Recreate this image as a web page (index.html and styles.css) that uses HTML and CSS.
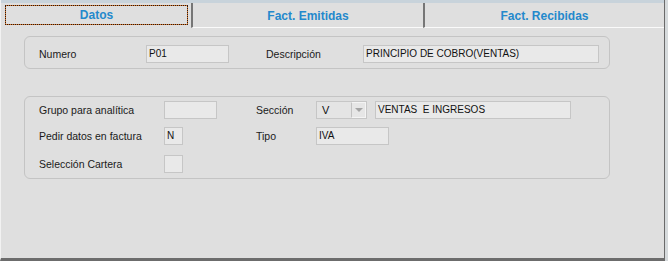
FILE: index.html
```html
<!DOCTYPE html>
<html lang="es">

<head>
    <meta charset="UTF-8">
    <title>Forma de cobro</title>
    <link rel="stylesheet" href="styles.css">
</head>

<body>
    <div class="window">
        <div class="frame">
            <div class="topbar"></div>

            <div class="tabs">
                <div class="tab tab-active"><span class="focus">Datos</span></div>
                <div class="tab tab-second">Fact. Emitidas</div>
                <div class="tab tab-third">Fact. Recibidas</div>
            </div>

            <div class="panel">
                <div class="group group-top">
                    <div class="row">
                        <label class="lbl lbl-num">Numero</label>
                        <div class="cell cell-num"><span class="field field-num">P01</span></div>
                        <label class="lbl lbl-desc">Descripción</label>
                        <span class="field field-desc">PRINCIPIO DE COBRO(VENTAS)</span>
                    </div>
                </div>

                <div class="group group-bottom">
                    <div class="row">
                        <label class="lbl lbl-wide">Grupo para analítica</label>
                        <div class="cell cell-wide"><span class="field field-grupo"></span></div>
                        <label class="lbl lbl-short">Sección</label>
                        <div class="select">
                            <span class="select-value">V</span>
                            <span class="select-btn">
                                <svg width="8" height="4" viewBox="0 0 8 4"><path d="M0 0 L8 0 L4 4 Z" fill="#a4a4a4"/></svg>
                            </span>
                        </div>
                        <span class="field field-seccion">VENTAS&nbsp; E INGRESOS</span>
                    </div>
                    <div class="row row-gap">
                        <label class="lbl lbl-wide">Pedir datos en factura</label>
                        <div class="cell cell-wide"><span class="field field-small">N</span></div>
                        <label class="lbl lbl-short">Tipo</label>
                        <span class="field field-tipo">IVA</span>
                    </div>
                    <div class="row row-gap-lg">
                        <label class="lbl lbl-wide">Selección Cartera</label>
                        <div class="cell cell-wide"><span class="field field-small"></span></div>
                    </div>
                </div>
            </div>
        </div>
    </div>
</body>

</html>
```

FILE: styles.css
```css
body {
    margin: 0;
    font-family: "Liberation Sans", Arial, sans-serif;
}

.window {
    width: 668px;
    height: 261px;
    background-color: #d6dadc;
}

.frame {
    width: 665px;
    height: 261px;
    box-sizing: border-box;
    display: flex;
    flex-direction: column;
    background-color: #dfdfdf;
    border-left: 1px solid #f2f2f2;
    border-right: 1px solid #6a6a6a;
    border-bottom: 3px solid #6c6c6c;
}

.topbar {
    height: 3px;
    background-color: #c8d3db;
}

/* onglets */
.tabs {
    display: flex;
    height: 25px;
}

.tab {
    box-sizing: border-box;
    display: flex;
    align-items: center;
    justify-content: center;
    font-size: 12px;
    font-weight: bold;
    color: #2489cc;
}

.tab-active {
    width: 188px;
    margin-left: 2px;
    padding: 2px 3px 3px 2px;
}

.focus {
    flex: 1;
    align-self: stretch;
    display: flex;
    align-items: center;
    justify-content: center;
    border: 1px solid #d9782e;
    outline: 1px dotted #2a1a10;
    outline-offset: -1px;
    padding-bottom: 1px;
}

.tab-second,
.tab-third {
    border-left: 2px solid #767676;
    border-bottom: 1px solid #fafafa;
    padding-top: 1px;
}

.tab-second {
    width: 232px;
}

.tab-third {
    flex: 1;
}

/* contenu */
.panel {
    flex: 1;
    padding: 8px 0 0 23px;
}

.group {
    width: 586px;
    box-sizing: border-box;
    border: 1px solid #c4c4c4;
    border-radius: 6px;
    padding: 0 0 0 14px;
}

.group-top {
    padding-top: 8px;
    padding-bottom: 5px;
}

.group-bottom {
    margin-top: 27px;
    padding-top: 4px;
    padding-bottom: 5px;
}

.row {
    display: flex;
    align-items: center;
    height: 18px;
}

.row-gap {
    margin-top: 8px;
}

.row-gap-lg {
    margin-top: 10px;
}

.lbl {
    font-size: 10.5px;
    color: #1a1a1a;
}

.lbl-num {
    width: 107px;
}

.lbl-desc {
    width: 97px;
}

.lbl-wide {
    width: 125px;
}

.lbl-short {
    width: 60px;
}

.cell-num {
    width: 120px;
}

.cell-wide {
    width: 92px;
}

.field {
    display: block;
    box-sizing: border-box;
    height: 18px;
    padding: 1px 2px;
    line-height: 14px;
    font-size: 10px;
    color: #111;
    background-color: #e9e9e9;
    border: 1px solid #c6c6c6;
    white-space: nowrap;
}

.field-num {
    width: 83px;
}

.field-desc {
    width: 236px;
}

.field-grupo {
    width: 53px;
}

.field-small {
    width: 19px;
}

.field-tipo {
    width: 73px;
}

.field-seccion {
    width: 196px;
    margin-left: 8px;
}

/* liste déroulante */
.select {
    display: flex;
    width: 51px;
    height: 18px;
    box-sizing: border-box;
    border: 1px solid #c6c6c6;
    background-color: #e4e4e4;
}

.select-value {
    flex: 1;
    padding-left: 5px;
    font-size: 11px;
    line-height: 16px;
    color: #111;
}

.select-btn {
    width: 15px;
    box-sizing: border-box;
    display: flex;
    align-items: center;
    justify-content: center;
    border: 1px solid #f4f4f4;
    border-left-color: #c2c2c2;
    background-color: #e6e6e6;
}
```
